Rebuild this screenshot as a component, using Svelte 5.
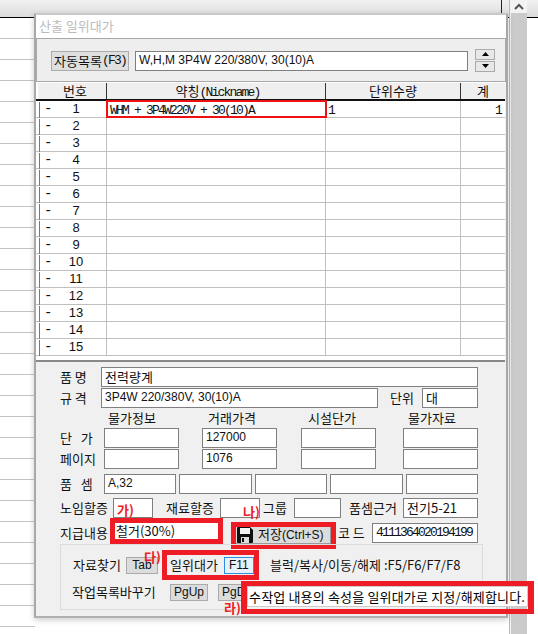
<script>
  const sheetLines = Array.from({ length: 30 }, (_, i) => i);
  const rows = Array.from({ length: 15 }, (_, i) => i + 1);
  const priceHeads = ['물가정보', '거래가격', '시설단가', '물가자료'];
  const prices = ['', '127000', '', ''];
  const pages = ['', '1076', '', ''];
  const poomsem = ['A,32', '', '', '', ''];
</script>

<div class="desk">
  <div class="topbar"><span class="topline"></span></div>
  <div class="sheet">
    {#each sheetLines as i (i)}<div class="sheetrow"></div>{/each}
  </div>
  <div class="scroll">
    <div class="scrollbtn">
      <svg width="10" height="7" viewBox="0 0 10 7"><path d="M1 6 L5 2 L9 6" fill="none" stroke="#555" stroke-width="2"/></svg>
    </div>
    <div class="thumb"></div>
  </div>

  <div class="window">
    <div class="title">산출 일위대가</div>

    <div class="toolbar">
      <div class="btn autobtn">자동목록<span class="mono">(F3)</span></div>
      <div class="field autofield">W,H,M 3P4W 220/380V, 30(10)A</div>
      <div class="spin">
        <div class="spinbtn"><svg width="7" height="4" viewBox="0 0 7 4"><path d="M3.5 0 L7 4 H0 Z" fill="#000"/></svg></div>
        <div class="spinbtn"><svg width="7" height="4" viewBox="0 0 7 4"><path d="M0 0 H7 L3.5 4 Z" fill="#000"/></svg></div>
      </div>
    </div>

    <div class="grid">
      <div class="gridrow head">
        <div class="c num">번호</div>
        <div class="c nick">약칭<span class="mono">(Nickname)</span></div>
        <div class="c qty">단위수량</div>
        <div class="c total">계</div>
      </div>
      {#each rows as n (n)}
        <div class="gridrow">
          <div class="c num"><span class="tick"></span><span class="dash">-</span><span class="no">{n}</span></div>
          <div class="c nick" class:selected={n === 1}>{#if n === 1}<span class="mono">WHM + 3P4W220V + 30(10)A</span>{/if}</div>
          <div class="c qty">{#if n === 1}<span class="mono">1</span>{/if}</div>
          <div class="c total">{#if n === 1}<span class="mono">1</span>{/if}</div>
        </div>
      {/each}
    </div>

    <div class="form">
      <div class="row r1">
        <span class="lab lab1">품 명</span>
        <div class="field ko wname">전력량계</div>
      </div>
      <div class="row r2">
        <span class="lab lab1">규 격</span>
        <div class="field wspec">3P4W 220/380V, 30(10)A</div>
        <span class="lab unitlab">단위</span>
        <div class="field ko wunit">대</div>
      </div>
      <div class="row heads">
        {#each priceHeads as h (h)}<span class="phead">{h}</span>{/each}
      </div>
      <div class="row r4">
        <span class="lab lab2">단&nbsp;&nbsp;&nbsp;가</span>
        <div class="pricecells">
          {#each prices as p, i (i)}<div class="field wprice">{p}</div>{/each}
        </div>
      </div>
      <div class="row r5">
        <span class="lab lab2">페이지</span>
        <div class="pricecells">
          {#each pages as p, i (i)}<div class="field wprice">{p}</div>{/each}
        </div>
      </div>
      <div class="row r6">
        <span class="lab lab2">품&nbsp;&nbsp;&nbsp;셈</span>
        <div class="semcells">
          {#each poomsem as p, i (i)}<div class="field wsem">{p}</div>{/each}
        </div>
      </div>
      <div class="row r7">
        <span class="lab lab3">노임할증</span>
        <div class="field wrate"></div>
        <span class="lab lab4">재료할증</span>
        <div class="field wrate2"></div>
        <span class="lab lab5">그룹</span>
        <div class="field wgroup"></div>
        <span class="lab lab6">품셈근거</span>
        <div class="field ko wbasis">전기5-21</div>
      </div>
      <div class="row r8">
        <span class="lab lab3">지급내용</span>
        <div class="redbox paybox"><div class="payfield">철거(30%)</div></div>
        <div class="redbox savebox">
          <div class="savebtn">
            <svg width="16" height="16" viewBox="0 0 16 16">
              <path d="M0 1 Q0 0 1 0 H13 L16 3 V15 Q16 16 15 16 H1 Q0 16 0 15 Z" fill="#111"/>
              <rect x="3" y="1" width="10" height="6" fill="#f4f4f4"/>
              <rect x="4" y="10" width="8" height="6" fill="#ddd"/>
              <rect x="5" y="11" width="2" height="4" fill="#111"/>
            </svg>
            <span>저장<span class="sans">(Ctrl+S)</span></span>
          </div>
        </div>
        <span class="lab codelab">코 드</span>
        <div class="field wcode"><span class="mono">4111364020194199</span></div>
      </div>

      <div class="group">
        <div class="grow g1">
          <span class="glab gl1">자료찾기</span>
          <div class="key tab">Tab</div>
          <div class="redbox f11box">
            <span class="glab">일위대가</span>
            <div class="key f11">F11</div>
          </div>
          <span class="hint">블럭/복사/이동/해제 :F5/F6/F7/F8</span>
        </div>
        <div class="grow g2">
          <span class="glab gl2">작업목록바꾸기</span>
          <div class="key pg">PgUp</div>
          <div class="key pg pg2">PgDn</div>
        </div>
      </div>
    </div>
  </div>

  <div class="redbox tipbox"><div class="tip">수작업 내용의 속성을 일위대가로 지정/해제합니다.</div></div>
  <span class="note n1">가)</span>
  <span class="note n2">나)</span>
  <span class="note n3">다)</span>
  <span class="note n4">라)</span>
</div>

<style>
  :global(body) {
    margin: 0;
    background: #fff;
  }
  .desk {
    position: relative;
    width: 538px;
    height: 634px;
    overflow: hidden;
    background: #fff;
    font-family: "Noto Sans CJK KR", "Liberation Sans", sans-serif;
    font-size: 13px;
    line-height: 16px;
    color: #111;
  }
  .mono {
    font-family: "Liberation Mono", monospace;
    font-size: 13px;
    letter-spacing: -1.8px;
  }
  .sans {
    font-family: "Liberation Sans", sans-serif;
    font-size: 12px;
  }
  .topbar {
    height: 18px;
    box-sizing: border-box;
    background: linear-gradient(#f1f1f1, #dcdcdc);
    border-bottom: 1px solid #000;
    position: relative;
  }
  .topline {
    position: absolute;
    left: 501px;
    top: 0;
    width: 1px;
    height: 13px;
    background: #222;
  }
  .sheet {
    width: 35px;
  }
  .sheetrow {
    height: 21px;
    box-sizing: border-box;
    border-bottom: 1px solid #c4c4c4;
  }
  .scroll {
    position: absolute;
    top: 0;
    right: 11px;
    bottom: 0;
    width: 18px;
    box-sizing: border-box;
    border-left: 1px solid #bbb;
    background: #f3f3f3;
    padding-left: 1px;
    display: flex;
    flex-direction: column;
  }
  .scrollbtn {
    height: 13px;
    display: flex;
    align-items: center;
    justify-content: center;
  }
  .thumb {
    flex: 1;
    background: #cbcbcb;
  }
  .window {
    position: absolute;
    left: 34px;
    top: 13px;
    width: 474px;
    height: 605px;
    box-sizing: border-box;
    border: 2px solid #a8a8a8;
    border-top-color: #c8c8c8;
    border-bottom-color: #b0b0b0;
    background: #f0f0f0;
    box-shadow: 0 2px 6px rgba(0, 0, 0, 0.2);
  }
  .title {
    height: 23px;
    background: #fff;
    color: #bbb;
    line-height: 22px;
    padding-left: 3px;
  }
  .toolbar {
    height: 44px;
    box-sizing: border-box;
    border: 1px solid #a8a8a8;
    background: #eeeeee;
    display: flex;
    align-items: center;
    padding: 0 10px 0 14px;
  }
  .btn {
    border: 1px solid #aaa;
    background: #dfdfdf;
    box-sizing: border-box;
    display: flex;
    align-items: center;
    justify-content: center;
  }
  .autobtn {
    width: 78px;
    height: 20px;
    margin-top: 2px;
  }
  .field {
    box-sizing: border-box;
    height: 20px;
    border: 1px solid #7f7f7f;
    background: #fff;
    padding: 0 3px;
    font-family: "Liberation Sans", "Noto Sans CJK KR", sans-serif;
    font-size: 12px;
    line-height: 17px;
    white-space: nowrap;
    overflow: hidden;
  }
  .ko {
    font-family: "Noto Sans CJK KR", sans-serif;
    font-size: 13px;
  }
  .autofield {
    width: 333px;
    margin: 2px 0 0 6px;
  }
  .spin {
    margin-left: 7px;
    display: flex;
    flex-direction: column;
    gap: 1px;
  }
  .spinbtn {
    width: 20px;
    height: 11px;
    box-sizing: border-box;
    border: 1px solid #aaa;
    background: #e8e8e8;
    display: flex;
    align-items: center;
    justify-content: center;
  }
  .grid {
    background: #fff;
    padding-top: 1px;
    border-bottom: 2px solid #888;
    height: 280px;
    box-sizing: border-box;
    margin-right: 1px;
  }
  .gridrow {
    display: flex;
    height: 17px;
    box-sizing: border-box;
    border-bottom: 1px solid #c0c0c0;
    line-height: 16px;
  }
  .head {
    background: #efefef;
    border-bottom: 2px solid #111;
    height: 18px;
    text-align: center;
  }
  .c {
    box-sizing: border-box;
    border-right: 1px solid #c0c0c0;
    position: relative;
    overflow: visible;
  }
  .head .c {
    border-right: 1px solid #333;
  }
  .num {
    width: 71px;
    display: flex;
  }
  .head .num {
    justify-content: center;
    padding-left: 8px;
    box-shadow: inset 2px 0 0 #fff;
  }
  .nick {
    width: 219px;
    padding-left: 3px;
  }
  .qty {
    width: 135px;
    padding-left: 2px;
  }
  .total {
    width: 44px;
    padding-right: 4px;
    text-align: right;
    border-right: 0;
  }
  .head .total {
    border-right: 0;
    text-align: center;
    padding: 0;
  }
  .head .qty {
    padding: 0;
  }
  .tick {
    position: absolute;
    left: 3px;
    top: 1px;
    bottom: -1px;
    width: 1px;
    background: #777;
  }
  .dash {
    margin-left: 8px;
    width: 12px;
    font-family: "Liberation Mono", monospace;
    font-size: 14px;
  }
  .no {
    width: 40px;
    text-align: center;
    font-family: "Liberation Sans", sans-serif;
    font-size: 13px;
  }
  .selected {
    outline: 2px solid #ee1111;
    outline-offset: -1px;
    z-index: 1;
  }
  .form {
    height: 254px;
    box-sizing: border-box;
    padding-top: 5px;
    position: relative;
  }
  .row {
    display: flex;
    align-items: center;
  }
  .lab {
    flex: none;
    white-space: nowrap;
  }
  .lab1 {
    margin-left: 24px;
    width: 41px;
  }
  .lab2 {
    margin-left: 24px;
    width: 44px;
  }
  .r1 { height: 20px; }
  .r2 { height: 20px; margin-top: 1px; }
  .wname { width: 377px; }
  .wspec { width: 277px; }
  .unitlab { margin-left: 12px; width: 32px; }
  .wunit { width: 56px; }
  .heads {
    height: 20px;
    padding-left: 72px;
    gap: 52px;
  }
  .phead { width: 48px; white-space: nowrap; }
  .r4 { height: 20px; }
  .r5 { height: 20px; margin-top: 1px; }
  .pricecells {
    display: grid;
    grid-template-columns: 98px 99px 102px 75px;
  }
  .wprice { width: 75px; }
  .r6 { height: 20px; margin-top: 5px; }
  .semcells {
    display: flex;
    gap: 3px;
  }
  .wsem { width: 72.4px; }
  .r7 { height: 20px; margin-top: 4px; }
  .lab3 { margin-left: 24px; width: 53px; }
  .wrate { width: 40px; }
  .lab4 { margin-left: 13px; width: 54px; }
  .wrate2 { width: 40px; }
  .lab5 { margin-left: 3px; width: 31px; }
  .wgroup { width: 47px; }
  .lab6 { margin-left: 8px; width: 54px; }
  .wbasis { width: 75px; }
  .r8 { height: 20px; margin-top: 5px; position: relative; }
  .redbox {
    box-sizing: border-box;
    border: 5px solid #ee1c25;
  }
  .r8 .lab3 { width: 50px; }
  .paybox {
    width: 113px;
    height: 26px;
    margin-top: -4px;
    flex: none;
  }
  .payfield {
    background: #fff;
    height: 16px;
    padding-left: 1px;
    line-height: 15px;
    white-space: nowrap;
  }
  .savebox {
    width: 105px;
    height: 27px;
    margin-left: 8px;
    margin-top: 4px;
    flex: none;
  }
  .savebtn {
    height: 17px;
    background: #dcdcdc;
    border-right: 1px solid #999;
    border-bottom: 1px solid #999;
    box-sizing: border-box;
    display: flex;
    align-items: center;
    gap: 5px;
    padding-left: 1px;
    white-space: nowrap;
  }
  .codelab { margin-left: 2px; width: 34px; }
  .wcode { width: 106px; }
  .group {
    position: absolute;
    left: 24px;
    top: 182px;
    width: 423px;
    height: 66px;
    box-sizing: border-box;
    border: 1px solid #dcdcdc;
  }
  .grow {
    display: flex;
    align-items: center;
  }
  .g1 {
    height: 30px;
    margin-top: 5px;
  }
  .g2 {
    height: 20px;
    margin-top: 2px;
  }
  .glab { flex: none; }
  .gl1 { margin-left: 12px; width: 53px; }
  .gl2 { margin-left: 11px; width: 98px; white-space: nowrap; }
  .key {
    box-sizing: border-box;
    height: 17px;
    border: 1px solid #aaa;
    background: #dcdcdc;
    font-family: "Liberation Sans", sans-serif;
    font-size: 12px;
    line-height: 14px;
    text-align: center;
    flex: none;
  }
  .tab { width: 32px; }
  .f11box {
    width: 97px;
    height: 30px;
    margin-left: 4px;
    display: flex;
    align-items: center;
    background: #f0f0f0;
    padding-left: 3px;
    gap: 6px;
    flex: none;
  }
  .f11 {
    width: 30px;
    background: #e6f1fb;
    border: 1px solid #2a8de0;
  }
  .hint {
    margin-left: 11px;
    white-space: nowrap;
  }
  .pg { width: 38px; }
  .pg2 { margin-left: 10px; }
  .tipbox {
    position: absolute;
    left: 241px;
    top: 581px;
    width: 293px;
    height: 33px;
    border-width: 5px 6px;
  }
  .tip {
    height: 21px;
    background: #fff;
    border: 1px solid #ccc;
    box-sizing: border-box;
    line-height: 19px;
    color: #000;
    white-space: nowrap;
    padding-left: 1px;
    letter-spacing: 0.17px;
    overflow: hidden;
  }
  .note {
    position: absolute;
    color: #ee1c25;
    font-size: 13px;
    font-weight: 700;
    line-height: 14px;
  }
  .n1 { left: 117px; top: 503px; }
  .n2 { left: 243px; top: 505px; }
  .n3 { left: 144px; top: 550px; }
  .n4 { left: 224px; top: 601px; }
</style>
